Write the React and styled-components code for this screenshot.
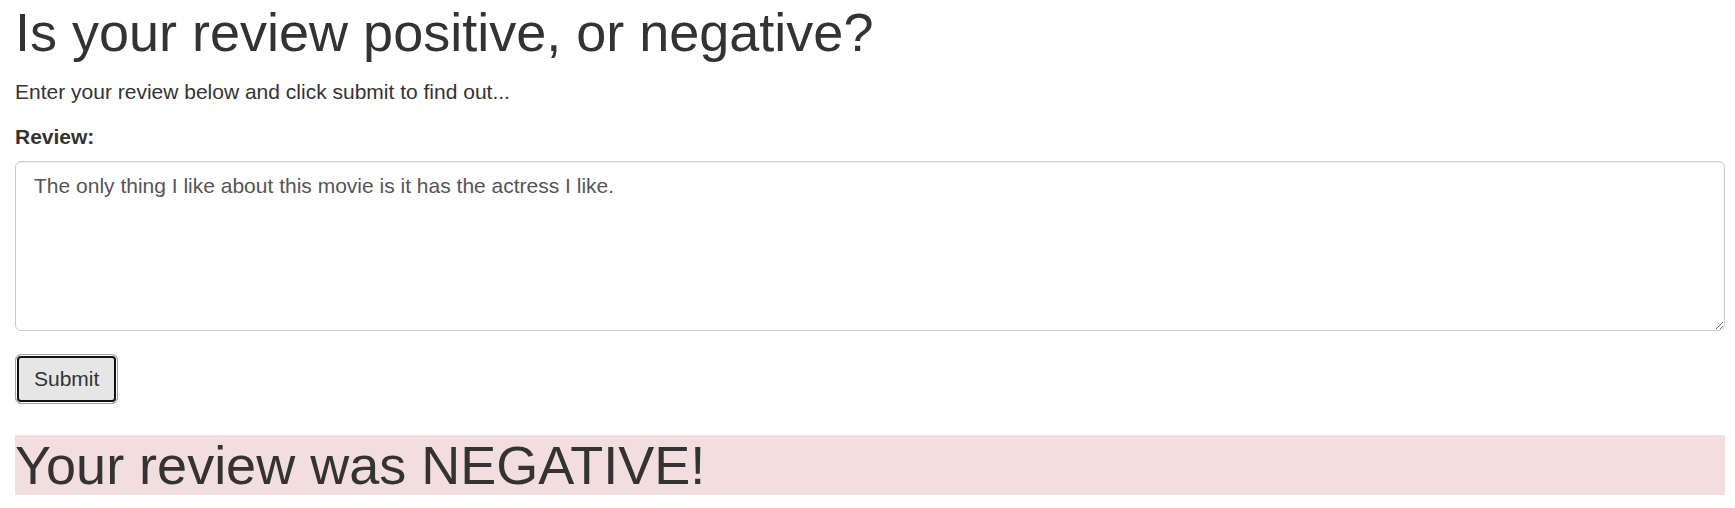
import React from "react";
import styled, { createGlobalStyle, css } from "styled-components";

const GlobalStyle = createGlobalStyle`
  *, *::before, *::after { box-sizing: border-box; }
  html, body { margin: 0; padding: 0; background: #fff; }
  body {
    font-family: "Liberation Sans", Arial, Helvetica, sans-serif;
    font-size: 21px;
    line-height: 1.42857;
    color: #333;
  }
`;

const Page = styled.main`
  display: flex;
  flex-direction: column;
  padding: 0 10px 0 15px;
`;

const Heading = styled.h1`
  margin: 3px 0 15px;
  font-size: 54px;
  font-weight: 400;
  line-height: 1.1;
  color: #333;
`;

const Lead = styled.p`
  margin: 0 0 15px;
`;

const Form = styled.form`
  display: flex;
  flex-direction: column;
  align-items: flex-start;
`;

const FormGroup = styled.div`
  display: flex;
  flex-direction: column;
  align-items: flex-start;
  width: 100%;
  margin-bottom: 23px;
`;

const Label = styled.label`
  display: inline-block;
  font-weight: 700;
  margin-bottom: 8.5px;
`;

const TextArea = styled.textarea`
  display: block;
  width: 100%;
  height: 170px;
  padding: 9px 18px;
  font-family: inherit;
  font-size: 21px;
  line-height: 1.42857;
  color: #555;
  background: #fff;
  border: 1px solid #ccc;
  border-radius: 6px;
  box-shadow: inset 0 1px 1px rgba(0, 0, 0, 0.075);
  resize: vertical;
  outline: none;
`;

const SubmitButton = styled.button`
  height: 50px;
  padding: 9px 18px;
  font-family: inherit;
  font-size: 21px;
  line-height: 1.42857;
  color: #333;
  background: #e6e6e6;
  border: 1px solid #a0a0a0;
  border-radius: 6px;
  box-shadow: inset 0 0 0 1px #fff, inset 0 0 0 3px #111;
  cursor: pointer;
`;

const tones = {
  negative: css`background: #f2dede;`,
  positive: css`background: #dff0d8;`,
};

const Result = styled.h1`
  margin: 31px 0 10px;
  font-size: 54px;
  font-weight: 400;
  line-height: 60px;
  color: #333;
  ${(p) => tones[p.$tone]}
`;

export default function App() {
  return (
    <>
      <GlobalStyle />
      <Page>
        <Heading>Is your review positive, or negative?</Heading>
        <Lead>Enter your review below and click submit to find out...</Lead>
        <Form onSubmit={(e) => e.preventDefault()}>
          <FormGroup>
            <Label htmlFor="review">Review:</Label>
            <TextArea
              id="review"
              defaultValue="The only thing I like about this movie is it has the actress I like."
            />
          </FormGroup>
          <SubmitButton type="submit">Submit</SubmitButton>
        </Form>
        <Result $tone="negative">Your review was NEGATIVE!</Result>
      </Page>
    </>
  );
}
